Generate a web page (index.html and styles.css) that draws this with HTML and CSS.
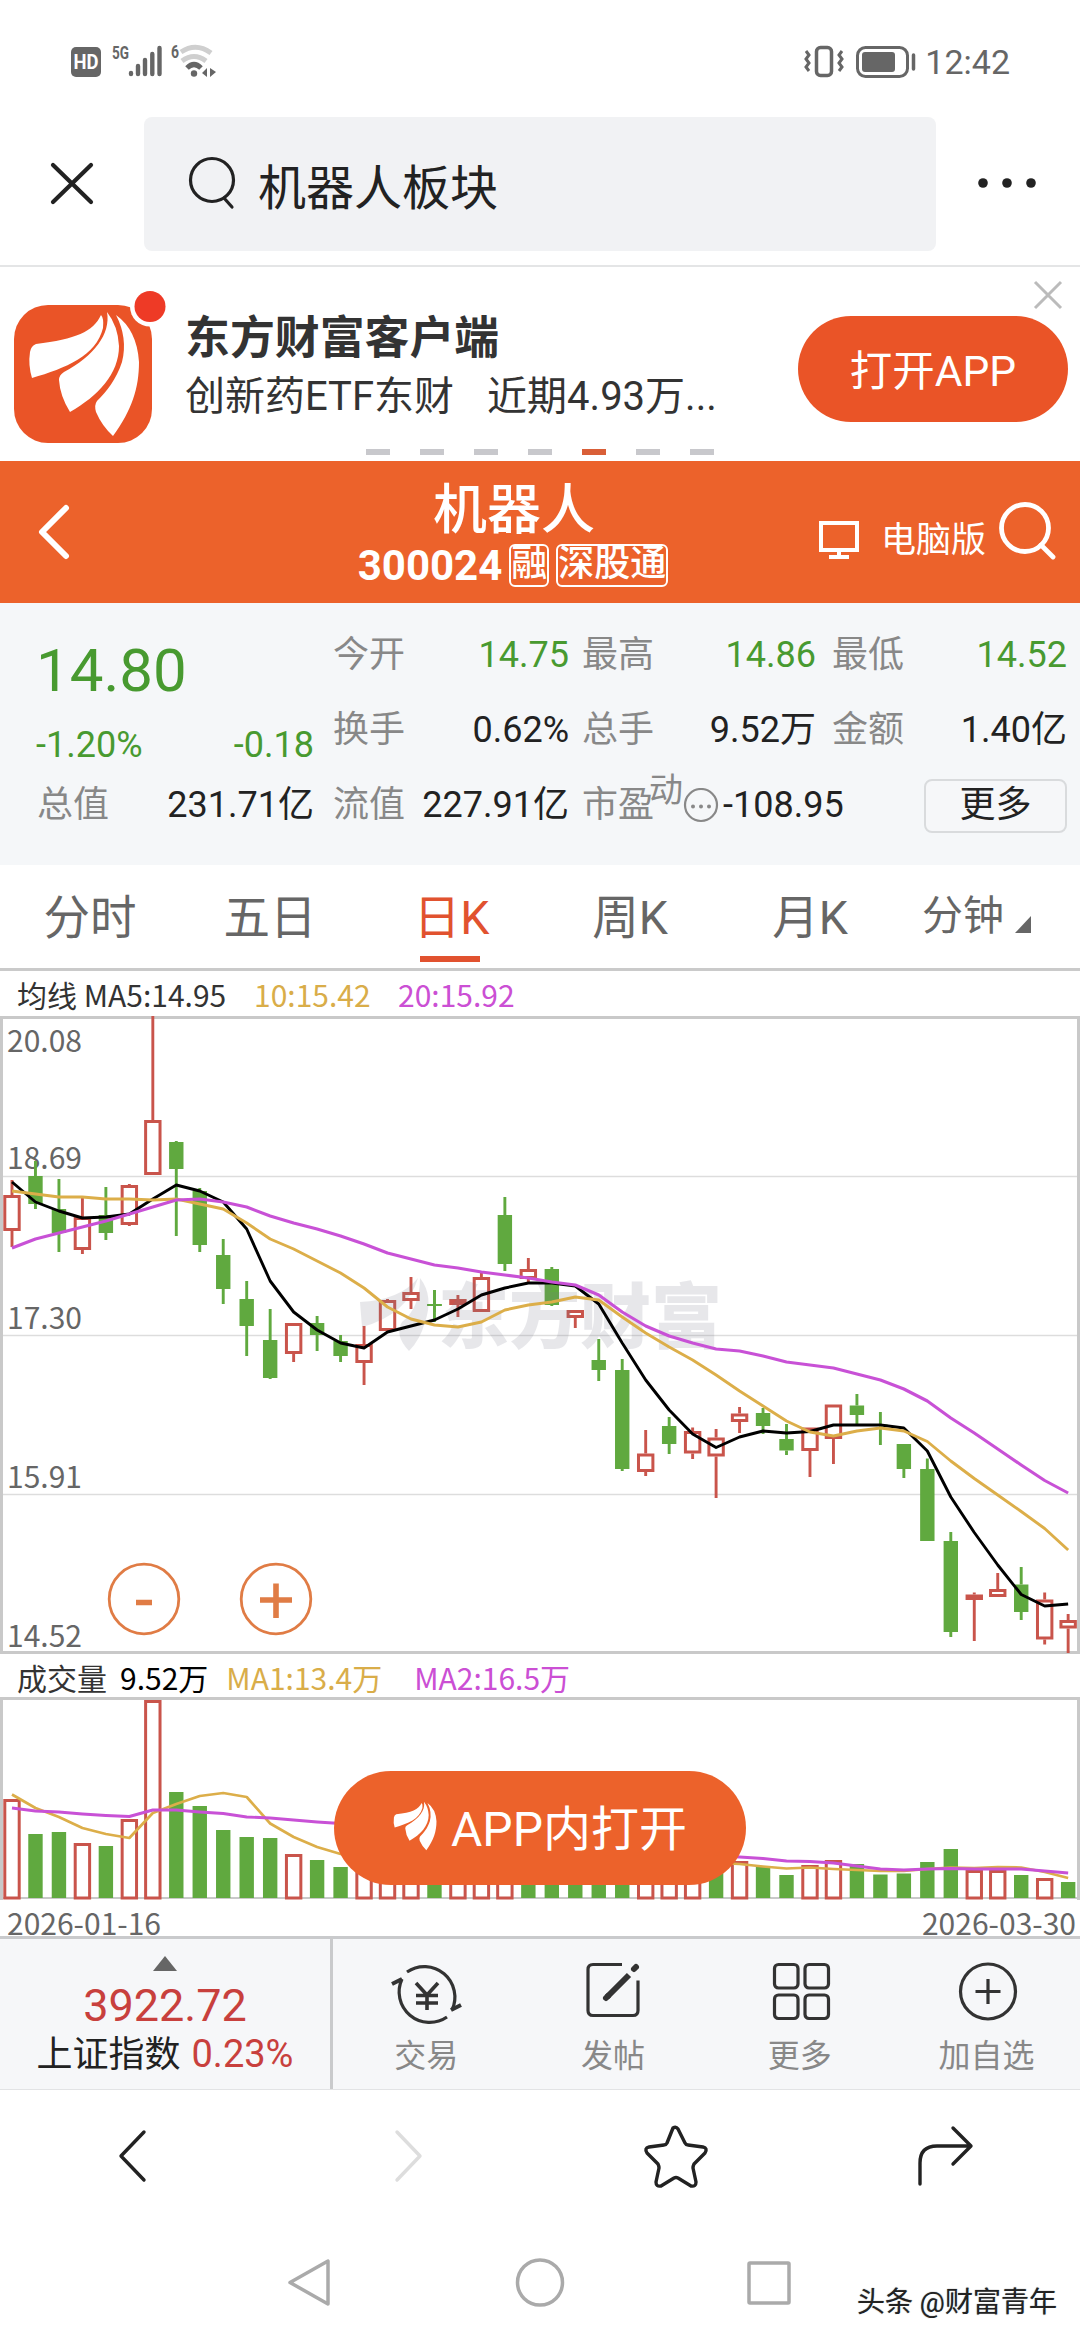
FILE: index.html
```html
<!DOCTYPE html>
<html lang="zh-CN">
<head>
<meta charset="utf-8">
<title>机器人 300024</title>
<link rel="stylesheet" href="styles.css">
</head>
<body>
<svg class="defs" width="0" height="0">
  <symbol id="feathers" viewBox="28 40 112 128">
    <path d="M101 45C93 62 76 69 36 74Q31 76 30 82Q28 95 32 108C66 98 96 86 103 58Q104 48 101 45Z"/>
    <path d="M107 42C111 64 94 86 64 102Q59 105 59 110Q60 126 70 142C98 126 119 104 119 76Q118 56 107 42Z"/>
    <path d="M116 45Q128 68 122 92C116 110 107 121 97 131Q94 135 96 142Q102 156 113 166C132 140 139 118 139 92Q137 60 116 45Z"/>
  </symbol>
</svg>
<div class="screen">
  <header class="status">
    <svg class="status-left" viewBox="60 30 180 60" width="180" height="60">
      <rect x="71" y="47" width="30" height="30" rx="5" fill="#666"/>
      <text x="86" y="68.500" class="hd" textLength="25" lengthAdjust="spacingAndGlyphs">HD</text>
      <text x="112" y="59" class="net" textLength="17" lengthAdjust="spacingAndGlyphs">5G</text>
      <g stroke="#666" stroke-width="4.400" stroke-linecap="round"><path d="M131 73v1M138 66v8M145 60v14M152.300 54v20M159.500 48v26"/></g>
      <text x="171" y="58" class="net" textLength="8" lengthAdjust="spacingAndGlyphs">6</text>
      <g fill="none" stroke="#cfcfcf" stroke-width="5"><path d="M181 52Q196 42 211 53"/><path d="M182 61Q194 52 206 61"/></g>
      <path d="M187 68Q194 61 201 68" fill="none" stroke="#666" stroke-width="5"/>
      <circle cx="194" cy="73.500" r="3.200" fill="#666"/>
      <path d="M207 68v9l-5-4zM210 68l6 4-6 5z" fill="#666"/>
    </svg>
    <div class="status-right">
      <svg viewBox="800 40 120 42" width="120" height="42" fill="none" stroke="#666">
        <rect x="815.500" y="47.500" width="15" height="28" rx="4" stroke-width="3.500"/>
        <path d="M805 51l3 4-3 4 3 4-3 4 3 4M841 51l-3 4 3 4-3 4 3 4-3 4" stroke-width="3"/>
        <rect x="856.500" y="47.500" width="50" height="29" rx="8" stroke-width="3"/>
        <rect x="861" y="52" width="33" height="20" rx="3" fill="#666" stroke="none"/>
        <path d="M912.500 55v14" stroke-width="3.500" stroke-linecap="round"/>
      </svg>
      <span class="clock">12:42</span>
    </div>
  </header>
  <div class="browser-bar">
    <svg viewBox="0 0 144 134" width="144" height="134" fill="none" stroke="#222" stroke-width="4.200" stroke-linecap="round"><path d="M53 48l38 37M91 48l-38 37"/></svg>
    <div class="search">
      <svg viewBox="0 0 54 54" width="54" height="54" fill="none" stroke="#222" stroke-width="3.200" stroke-linecap="round"><circle cx="26" cy="24" r="21.500"/><path d="M38 42l8 9"/></svg>
      <span>机器人板块</span>
    </div>
    <svg viewBox="0 0 144 134" width="144" height="134" fill="#222"><circle cx="47" cy="66" r="4.800"/><circle cx="71" cy="66" r="4.800"/><circle cx="95" cy="66" r="4.800"/></svg>
  </div>

  <section class="promo">
    <div class="promo-main">
      <svg class="promo-logo" viewBox="0 0 166 170" width="166" height="170">
        <rect x="14" y="38" width="138" height="138" rx="34" fill="#ea5427"/>
        <use href="#feathers" x="28" y="43" width="112" height="128" fill="#fff"/>
        <circle cx="150" cy="39.500" r="20" fill="#fff"/><circle cx="150" cy="39.500" r="15.500" fill="#ee3a26"/>
      </svg>
      <div class="promo-copy">
        <strong>东方财富客户端</strong>
        <span>创新药ETF东财<span class="promo-gain">近期4.93万...</span></span>
      </div>
      <button class="promo-open">打开APP</button>
      <svg class="promo-close" viewBox="0 0 30 30" width="30" height="30" stroke="#bbb" stroke-width="3"><path d="M2 2l26 26M28 2L2 28"/></svg>
    </div>
    <div class="dots"><i></i><i></i><i></i><i></i><i class="on"></i><i></i><i></i></div>
  </section>

  <section class="title">
    <svg viewBox="0 0 36 58" width="36" height="58" fill="none" stroke="#fff" stroke-width="6" stroke-linecap="round" stroke-linejoin="round"><path d="M30 5L6 29l24 24"/></svg>
    <div class="title-text">
      <h1>机器人</h1>
      <p><b>300024</b><span>融</span><span>深股通</span></p>
    </div>
    <div class="title-tools">
      <svg viewBox="0 0 42 42" width="42" height="42" fill="none" stroke="#fff" stroke-width="4"><rect x="3" y="4" width="36" height="27"/><path d="M21 31v7M11 38h20"/></svg>
      <span>电脑版</span>
      <svg viewBox="0 0 60 60" width="60" height="60" fill="none" stroke="#fff" stroke-width="4.800" stroke-linecap="round"><circle cx="29" cy="26" r="23.500"/><path d="M45 43l12 12"/></svg>
    </div>
  </section>

  <section class="quote">
    <div class="price">
      <strong>14.80</strong>
      <div><span>-1.20%</span><span>-0.18</span></div>
    </div>
    <dl class="c2 up"><dt>今开</dt><dd>14.75</dd></dl>
    <dl class="c3 up"><dt>最高</dt><dd>14.86</dd></dl>
    <dl class="c4 up"><dt>最低</dt><dd>14.52</dd></dl>
    <dl class="c2"><dt>换手</dt><dd>0.62%</dd></dl>
    <dl class="c3"><dt>总手</dt><dd>9.52万</dd></dl>
    <dl class="c4"><dt>金额</dt><dd>1.40亿</dd></dl>
    <dl class="c1"><dt>总值</dt><dd>231.71亿</dd></dl>
    <dl class="c2"><dt>流值</dt><dd>227.91亿</dd></dl>
    <dl class="pe"><dt>市盈</dt><dt class="dyn">动</dt>
      <svg viewBox="0 0 36 36" width="36" height="36"><circle cx="18" cy="17" r="16" fill="none" stroke="#888" stroke-width="2.200"/><g fill="#888"><circle cx="10" cy="18.500" r="2"/><circle cx="18" cy="18.500" r="2"/><circle cx="26" cy="18.500" r="2"/></g></svg>
      <dd>-108.95</dd></dl>
    <button class="more">更多</button>
  </section>

  <nav class="tabs">
    <a>分时</a><a>五日</a><a class="active">日K</a><a>周K</a><a>月K</a><a class="minute">分钟<svg viewBox="0 0 16 17" width="16" height="17"><path d="M16 0v17H0z" fill="#666"/></svg></a>
  </nav>

  <div class="legend"><span class="ma5">均线 MA5:14.95</span><span class="gold ma10">10:15.42</span><span class="pink">20:15.92</span></div>
  <svg class="kline" viewBox="0 1016 1080 638" width="1080" height="638">
    <path d="M3 1176.500H1077M3 1335.500H1077M3 1494.500H1077" stroke="#ddd" stroke-width="1.500"/>
    <g class="axis"><text x="7" y="1051.500">20.08</text><text x="7" y="1169">18.69</text><text x="7" y="1328.500">17.30</text><text x="7" y="1488">15.91</text><text x="7" y="1647">14.52</text></g>
    <rect x="1.500" y="1017.500" width="1077" height="635" fill="none" stroke="#c9c9c9" stroke-width="3"/>
    <g id="candles"></g>
    <g class="mark"><path d="M360 1302Q400 1300 418 1278Q407 1315 362 1327ZM420 1278Q434 1296 425 1322Q420 1340 409 1351Q394 1335 402 1322Q420 1308 420 1278Z"/><text x="438" y="1342">东方财富</text></g>
    <g id="averages"></g>
    <g fill="#fff" stroke="#e07c45" stroke-width="2.800"><circle cx="144" cy="1599" r="34.800"/><circle cx="276" cy="1599" r="34.800"/></g>
    <g stroke="#e07c45" stroke-width="5.600"><path d="M136 1602.500h16M260 1600h32M276 1583.500v34.500"/></g>
  </svg>
  <div class="legend volume-legend"><span>成交量</span><span class="turnover">9.52万</span><span class="gold vma1">MA1:13.4万</span><span class="pink">MA2:16.5万</span></div>
  <div class="volume">
    <svg viewBox="0 1697 1080 239" width="1080" height="239">
      <path d="M1.500 1900V1698.500H1078.500V1900" fill="none" stroke="#c9c9c9" stroke-width="3"/>
      <path d="M0 1898H1080" stroke="#c9c9c9" stroke-width="2"/>
      <g id="volumes"></g>
      <g class="axis"><text x="7" y="1935">2026-01-16</text><text x="1076" y="1935" text-anchor="end">2026-03-30</text></g>
    </svg>
    <button class="app-open"><svg width="44" height="50" fill="#fff"><use href="#feathers" width="44" height="50"/></svg><span>APP内打开</span></button>
  </div>

  <section class="dock">
    <div class="index">
      <svg viewBox="0 0 24 15" width="24" height="15"><path d="M12 0l12 15H0z" fill="#666"/></svg>
      <strong>3922.72</strong>
      <p>上证指数 <em>0.23%</em></p>
    </div>
    <a><svg viewBox="390 1960 72 68" width="72" height="68" fill="none" stroke="#333" stroke-width="3.200"><path d="M407 1972A30.500 30.500 0 0 1 452 2010M447 2017A30.500 30.500 0 0 1 402 1979"/><path d="M392 1984l10-5M451 2010l10-5" stroke-width="4"/><path d="M416 1983l11 12 11-12M427 1995v15M416 1995.500h22M416 2003h22" stroke-width="3.600"/></svg><span>交易</span></a>
    <a><svg viewBox="577 1960 72 68" width="72" height="68" fill="none" stroke="#333" stroke-width="3.200"><path d="M622 1964.500H593q-5 0-5 5v41q0 5 5 5h40q5 0 5-5v-30"/><path d="M607 1997l22-22" stroke-width="6"/><path d="M606 1998l2-2M634 1969l2-2" stroke-width="6" stroke-linecap="round"/></svg><span>发帖</span></a>
    <a><svg viewBox="764 1960 72 68" width="72" height="68" fill="none" stroke="#333" stroke-width="3.200"><rect x="774.500" y="1964.500" width="23.500" height="23.500" rx="4"/><rect x="805" y="1964.500" width="23.500" height="23.500" rx="4"/><rect x="774.500" y="1995" width="23.500" height="23.500" rx="4"/><rect x="805" y="1995" width="23.500" height="23.500" rx="4"/></svg><span>更多</span></a>
    <a><svg viewBox="952 1960 72 68" width="72" height="68" fill="none" stroke="#333" stroke-width="3.200"><circle cx="989" cy="1991.500" r="27.500"/><path d="M976.500 1991.500h25M989 1979v25"/></svg><span>加自选</span></a>
  </section>

  <nav class="browser-nav">
    <svg viewBox="80 2117 100 76" width="100" height="76" stroke="#222"><path d="M144 2132l-23 24 23 24"/></svg>
    <svg viewBox="351 2117 100 76" width="100" height="76" stroke="#ddd"><path d="M396 2132l23 24-23 24"/></svg>
    <svg viewBox="622 2117 100 76" width="100" height="76" stroke="#222"><path d="M672 2128q3-2 5 1l7 14q1 2 3 2l15 2q5 1 2 6l-11 11q-1 2-1 4l3 14q0 5-5 4l-13-8q-2-1-4 0l-13 8q-5 1-5-4l3-14q0-2-1-4l-11-11q-3-5 2-6l15-2q2 0 3-2z"/></svg>
    <svg viewBox="895 2117 100 76" width="100" height="76" stroke="#222"><path d="M920 2184v-21q0-17 17-17h33M953 2128l18 18-18 18"/></svg>
  </nav>
  <footer class="system-nav">
    <svg viewBox="280 2250 520 62" width="520" height="62" fill="none" stroke="#aaa" stroke-width="3.500" stroke-linejoin="round"><path d="M328 2260v43l-38-21.500z"/><circle cx="540" cy="2281.500" r="22.500"/><rect x="749" y="2262" width="40" height="40" rx="1"/></svg>
    <span>头条 @财富青年</span>
  </footer>
</div>
<script src="chart.js"></script>
</body>
</html>
```
FILE: styles.css
```css
* { box-sizing: border-box; }
body { margin: 0; background: #fff; color: #222; font-family: Roboto, "Noto Sans CJK SC", sans-serif; }
h1, p, dl, dt, dd { margin: 0; }
button { border: 0; padding: 0; font: inherit; }
svg { display: block; flex: none; }
.defs { position: absolute; }
.screen { width: 1080px; height: 2340px; overflow: hidden; display: flex; flex-direction: column; background: #fff; }
.screen > * { flex: none; }

.status { height: 117px; display: flex; justify-content: space-between; padding: 30px 70px 0 60px; }
.hd { font: 700 20px Roboto, sans-serif; fill: #fff; text-anchor: middle; }
.net { font: 700 19px Roboto, sans-serif; fill: #666; }
.status-right { display: flex; padding-top: 10px; gap: 4px; }
.clock { font-size: 34px; line-height: 44px; color: #666; }

.browser-bar { height: 150px; display: flex; border-bottom: 2px solid #e4e5e6; }
.search { width: 792px; height: 134px; background: #f1f2f4; border-radius: 8px; display: flex; align-items: center; padding: 0 0 2px 42px; gap: 18px; font-size: 48px; }
.search span { padding-top: 1px; }

.promo { height: 194px; background: #fff; }
.promo-main { height: 178px; position: relative; display: flex; }
.promo-logo { overflow: visible; }
.promo-copy { width: 632px; padding: 42px 0 0 19px; display: flex; flex-direction: column; color: #333; font-size: 40px; line-height: 56px; white-space: nowrap; }
.promo-copy strong { font-size: 44.9px; line-height: 60px; }
.promo-gain { margin-left: 33px; }
.promo-open { width: 270px; height: 106px; margin-top: 49px; padding-bottom: 4px; border-radius: 53px; background: #ea5427; color: #fff; font-size: 42.5px; }
.promo-close { position: absolute; right: 17px; top: 13px; }
.dots { display: flex; justify-content: center; gap: 30px; padding-top: 4px; }
.dots i { width: 24px; height: 6px; background: #c8c8cc; }
.dots .on { background: #d95f38; }

.title { height: 142px; background: #ec622b; color: #fff; display: flex; align-items: center; padding: 0 24px 0 36px; }
.title-text { width: 500px; margin-left: 192px; padding-top: 7px; text-align: center; }
.title h1 { font-size: 54px; font-weight: 500; line-height: 66px; height: 59px; }
.title p { display: flex; justify-content: center; align-items: center; gap: 7px; height: 56px; margin-right: 2px; }
.title b { font-size: 42px; font-weight: 700; }
.title p span { border: 2px solid #fff; border-radius: 6px; height: 43px; font-size: 36px; line-height: 36px; font-weight: 500; }
.title-tools { display: flex; align-items: center; margin-left: auto; font-size: 35px; }
.title-tools span { margin: 8px 10px 0 21px; }
.title-tools svg:first-child { margin-top: 15px; }

.quote { height: 262px; background: #f5f7f9; padding: 15px 13px 0 37px; display: grid; grid-template-columns: 277px 236px 234px 235px; grid-template-rows: 75px 75px 75px; column-gap: 13px; justify-content: space-between; font-size: 36px; line-height: 75px; }
.price { grid-row: 1 / 3; color: #489a30; }
.price strong { display: block; font-size: 60px; font-weight: 400; line-height: 106px; height: 90px; margin-left: -1px; }
.price div { display: flex; justify-content: space-between; line-height: 74px; margin-left: -1px; }
.quote dl { display: flex; justify-content: space-between; align-items: center; }
.quote dt { color: #888; }
.quote .up dd { color: #489a30; }
.c1 { grid-column: 1; }
.c2 { grid-column: 2; margin: 0 -3px 0 3px !important; }
.quote .pe { justify-content: flex-start; white-space: nowrap; }
.pe .dyn { font-size: 34px; padding-bottom: 31px; margin-left: -5px; }
.pe dd { margin-left: 4px; }
.more { justify-self: end; align-self: center; width: 143px; height: 54px; border: 2px solid #d9dbdd; border-radius: 8px; background: #f6f7f9; color: #222; line-height: 49px; }

.tabs { height: 106px; display: grid; grid-template-columns: repeat(6, 1fr); border-bottom: 3px solid #cacaca; font-size: 46.5px; line-height: 107px; color: #666; text-align: center; }
.tabs a { height: 103px; }
.tabs .active { color: #e1522f; background: linear-gradient(#e1522f, #e1522f) 50% 91px / 60px 6px no-repeat; text-indent: 3px; }
.tabs .minute { font-size: 41px; display: flex; align-items: center; padding-left: 22px; gap: 11px; }
.tabs .minute svg { margin-top: 16px; }

.legend { height: 45px; padding-left: 17px; font: 30px/46px "Noto Sans CJK SC", sans-serif; color: #333; display: flex; white-space: pre; }
.gold { color: #d9ad49; }
.pink { color: #cb4fd4; }
.ma5 { width: 237px; }
.ma10 { width: 144px; }
.volume-legend { height: 43px; line-height: 46px; }
.turnover { color: #000; margin: 0 18px 0 13px; }
.vma1 { margin-right: 32px; }
.axis { font: 30px "Noto Sans CJK SC", sans-serif; fill: #666; }
.mark { fill: #77778a; opacity: .17; font: 900 71px "Noto Sans CJK SC", sans-serif; }

.volume { height: 239px; position: relative; }
.app-open { position: absolute; left: 334px; top: 74px; width: 412px; height: 114px; border-radius: 57px; background: #ec622b; color: #fff; font-size: 48px; display: flex; align-items: center; justify-content: center; gap: 14px; }
.app-open svg { margin-bottom: 4px; }
.app-open span { margin-bottom: 7px; }

.dock { height: 154px; background: #f6f7f9; border-top: 3px solid #c9cacc; border-bottom: 1px solid #e2e3e5; display: flex; }
.index { width: 333px; border-right: 3px solid #c9cacc; display: flex; flex-direction: column; align-items: center; padding-top: 17px; color: #c8403d; }
.index strong { font-size: 45px; font-weight: 400; line-height: 52px; margin-top: 9px; }
.index p { font-size: 36px; line-height: 44px; color: #222; white-space: nowrap; }
.index em { font-style: normal; font-size: 38px; color: #c8403d; margin-left: 2px; }
.dock a { flex: 1; display: flex; flex-direction: column; align-items: center; padding-top: 21px; font-size: 32px; line-height: 48px; color: #888; }
.dock a span { margin-top: 4px; }

.browser-nav { height: 131px; display: flex; padding: 27px 85px 0 80px; justify-content: space-between; }
.browser-nav svg { fill: none; stroke-width: 3.4; stroke-linecap: round; stroke-linejoin: round; }
.system-nav { height: 119px; display: flex; padding: 30px 0 0 280px; position: relative; }
.system-nav span { position: absolute; right: 23px; top: 61px; font-size: 28px; line-height: 42px; color: #222; text-shadow: 1px 1px 1px #fff, 0 0 1px #333; }
```
FILE: chart.js
```js
const NS = "http://www.w3.org/2000/svg";
const RED = "#c9544b", GREEN = "#60a93f", GOLD = "#dcae49", PINK = "#c851d6";
const xAt = i => 12 + 23.47 * i;

function add(parent, name, attrs) {
  const el = document.createElementNS(NS, name);
  for (const key in attrs) el.setAttribute(key, attrs[key]);
  parent.appendChild(el);
}

function body(parent, color, x, top, bottom) {
  if (color === "G") {
    add(parent, "rect", { x: x - 7.2, y: top, width: 14.4, height: Math.max(bottom - top, 1.5), fill: GREEN });
  } else {
    add(parent, "rect", { x: x - 7.2, y: top + 1.5, width: 14.4, height: Math.max(bottom - top - 3, 1), fill: "none", stroke: RED, "stroke-width": 3 });
  }
}

// direction, high, body top, body bottom, low
const candles = [
  ["R",1180,1195,1231,1247],["G",1161,1176,1204,1209],["G",1179,1209,1233,1252],["R",1197,1217,1250,1254],
  ["G",1187,1215,1233,1240],["R",1184,1185,1225,1226],["R",1016,1120,1175,1175],["G",1141,1142,1169,1236],
  ["G",1188,1191,1245,1252],["G",1239,1255,1289,1304],["G",1281,1299,1326,1356],["G",1309,1340,1378,1379],
  ["R",1323,1323,1354,1362],["G",1316,1323,1335,1351],["G",1335,1341,1356,1362],["R",1326,1344,1363,1385],
  ["R",1299,1300,1331,1331],["R",1277,1292,1301,1309],["G",1290,1304,1306,1312],["R",1295,1299,1305,1317],
  ["R",1272,1277,1312,1312],["G",1197,1215,1264,1271],["R",1258,1269,1279,1283],["G",1267,1269,1305,1306],
  ["R",1310,1310,1318,1328],["G",1339,1360,1370,1381],["G",1359,1370,1469,1471],["R",1430,1453.5,1472,1476],
  ["G",1417,1426,1444,1454],["R",1427.5,1431,1453.5,1459],["R",1429,1437.5,1456.5,1498],["R",1407,1413.5,1422,1433],
  ["G",1408,1413,1426,1434],["G",1424,1439,1450.5,1455],["R",1427.5,1427.5,1451,1477],["R",1404.5,1404.5,1439,1464],
  ["G",1394,1405.5,1415,1424],["G",1412,1424.5,1426,1445],["G",1444,1444,1469,1478],["G",1458.5,1469,1541,1541],
  ["G",1532,1541,1632,1637],["R",1592.5,1594.5,1600,1641],["R",1573,1589,1597,1597],["G",1567,1584.5,1612,1620],
  ["R",1592.5,1599.5,1639.5,1644.5],["R",1614,1620,1628.5,1653]
];
const kline = document.getElementById("candles");
candles.forEach(([color, high, top, bottom, low], i) => {
  const x = xAt(i), paint = color === "G" ? GREEN : RED;
  add(kline, "path", { d: `M${x} ${high}V${top}M${x} ${bottom}V${low}`, stroke: paint, "stroke-width": 2.9 });
  body(kline, color, x, top, bottom);
});
// doji: opening and closing prices coincide
add(kline, "path", { d: `M${xAt(18)} 1290V1322`, stroke: GREEN, "stroke-width": 2.9 });
add(kline, "path", { d: `M${xAt(18) - 7.2} 1305H${xAt(18) + 7.2}`, stroke: GREEN, "stroke-width": 2 });

function line(parent, values, color, width, start = 0) {
  add(parent, "polyline", { points: values.map((y, i) => `${xAt(i + start)},${y}`).join(" "), fill: "none", stroke: color, "stroke-width": width, "stroke-linejoin": "round" });
}
const averages = document.getElementById("averages");
line(averages, [1182,1202,1211,1218,1217,1214,1199,1185,1191,1202,1229,1281,1312,1330,1343,1348,1332,1326,1320,1309,1295,1288,1283,1283,1286,1304,1343,1380,1410,1434,1447.5,1437,1431,1433,1431.5,1425,1425,1425,1428,1451,1497,1532.5,1565,1594.5,1606,1604], "#000", 2.9);
line(averages, [1191,1194,1197,1197,1199,1199,1200,1199,1204,1209,1223,1239,1249,1261,1273,1288,1307,1319,1325,1327,1322,1310,1305,1302,1297,1300,1317,1333,1347,1360,1375,1391,1406,1421,1432,1436,1431,1428,1431,1441.5,1461,1478.5,1495,1511.5,1528.5,1550], GOLD, 2.9);
line(averages, [1248,1239,1233,1227,1221,1214,1207,1200,1199,1202,1207,1216,1223,1229,1236,1244,1253,1259,1265,1268,1272,1275,1278,1282,1285,1295,1312,1326,1336,1343,1349,1351,1356,1362,1365,1368,1374,1380,1389,1401,1418,1433,1449,1465,1480.5,1493], PINK, 3.1);

const colors = "RGGRGRRGGGGGRGGRRRGRRRGGGGGRRRGRGGRRGGGGGRRGRG";
const tops = [1799,1834,1832,1843,1846,1819,1700,1792,1806,1830,1837,1838,1854,1860,1867,1868,1870,1870,1872,1872,1870,1872,1872,1872,1872,1872,1868,1872,1872,1872,1868,1861,1867,1875,1865,1860,1864,1874.5,1873.5,1862,1849,1870,1870,1875,1878,1882];
const volumes = document.getElementById("volumes");
tops.forEach((top, i) => body(volumes, colors[i], xAt(i), top, colors[i] === "G" ? 1898 : 1899.5));
line(volumes, [1794.5,1808,1817,1828,1834,1838,1813,1804,1796,1793,1797,1823.5,1837,1847,1854,1858,1860,1861,1862,1863,1864,1865,1865,1865,1865,1865,1865,1865,1864,1864,1863,1864,1866.5,1868.5,1867.5,1869,1870,1871,1871,1869,1867.5,1868,1867,1867.5,1872,1878], GOLD, 2.7);
line(volumes, [1808,1811,1812,1814,1815.5,1816.5,1810,1810,1812,1813.5,1817,1818,1820,1822,1823.5,1826,1828,1830,1832,1834,1836,1838,1840,1842,1844,1846,1848,1850,1852,1854,1856,1857,1858.5,1861,1861.5,1863,1866,1869,1870,1869,1868.5,1869,1869,1869,1871,1873], PINK, 2.9);
```
